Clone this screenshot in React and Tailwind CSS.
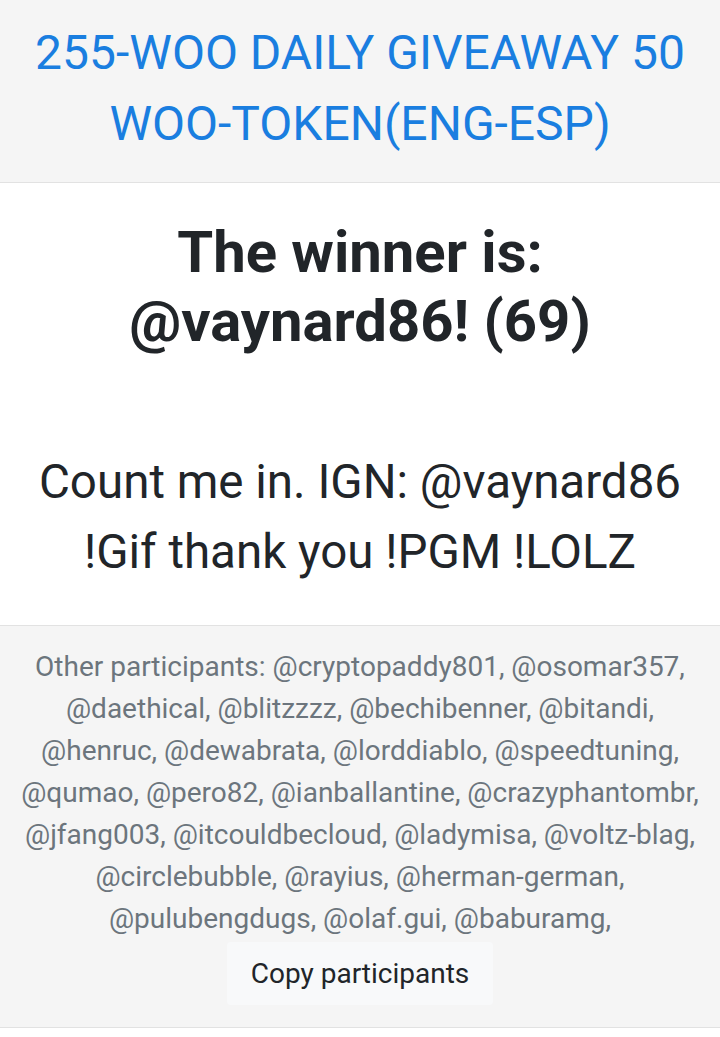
import React from "react";

// participant list, broken into the same lines as the original post
const participantLines = [
  "Other participants: @cryptopaddy801, @osomar357,",
  "@daethical, @blitzzzz, @bechibenner, @bitandi,",
  "@henruc, @dewabrata, @lorddiablo, @speedtuning,",
  "@qumao, @pero82, @ianballantine, @crazyphantombr,",
  "@jfang003, @itcouldbecloud, @ladymisa, @voltz-blag,",
  "@circlebubble, @rayius, @herman-german,",
  "@pulubengdugs, @olaf.gui, @baburamg,",
];

export default function App() {
  return (
    <div className="min-h-[1037px] bg-white font-['Roboto',sans-serif]">
      {/* Title */}
      <header className="bg-[#f5f5f5] border-b border-[#e2e2e2] pt-[17px] pb-[23px] text-center">
        <h1 className="text-[48px] leading-[71px] text-[#1a7ee0] whitespace-nowrap">
          255-WOO DAILY GIVEAWAY 50
          <br />
          WOO-TOKEN(ENG-ESP)
        </h1>
      </header>

      {/* Winner */}
      <section className="pt-[35px] pb-[38px] text-center text-[#212529] whitespace-nowrap">
        <h2 className="text-[58px] leading-[69px] font-bold">
          The winner is:
          <br />
          @vaynard86! (69)
        </h2>
        <p className="mt-[91px] text-[47.5px] leading-[70px]">
          Count me in. IGN: @vaynard86
          <br />
          !Gif thank you !PGM !LOLZ
        </p>
      </section>

      {/* Other participants */}
      <section className="bg-[#f5f5f5] border-y border-[#e2e2e2] pt-[20px] pb-[22px] flex flex-col items-center">
        <div className="text-[28px] leading-[42px] text-[#6c757d] text-center whitespace-nowrap">
          {participantLines.map((line) => (
            <div key={line}>{line}</div>
          ))}
        </div>
        <button className="mt-[2px] bg-[#f8f9fa] rounded px-[24px] py-[13px] text-[28px] leading-[37px] text-[#212529]">
          Copy participants
        </button>
      </section>
    </div>
  );
}
